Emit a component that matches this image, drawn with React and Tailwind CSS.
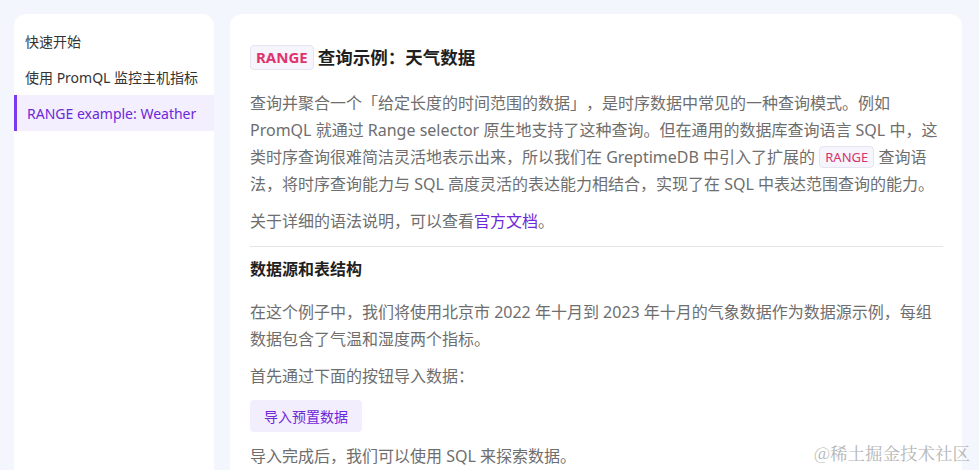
const font = { fontFamily: '"Noto Sans", "Noto Sans CJK SC", sans-serif' }

const navItems = ['快速开始', '使用 PromQL 监控主机指标', 'RANGE example: Weather']

const Code = ({ children }) => (
  <code className="inline-block rounded border border-[#e6e3f2] bg-[#f6f5fb] px-[5px] align-[1px] leading-[20px] text-[13px] text-[#d6336c] [font-family:inherit]">
    {children}
  </code>
)

const App = () => {
  const active = 2

  return (
    <div
      className="relative flex h-[470px] gap-4 overflow-hidden bg-[#f4f6fd] pl-[14px] pt-[14px] [text-spacing-trim:space-all]"
      style={font}
    >
      <aside className="w-[200px] shrink-0 rounded-t-xl bg-white pt-[9px]">
        {navItems.map((item, idx) => (
          <div
            key={item}
            className={
              idx === active
                ? 'flex h-9 items-center border-l-[3px] border-[#7c3aed] bg-[#f3effe] pl-[10px] text-[14px] text-[#6d28d9]'
                : 'flex h-9 items-center pl-[11px] text-[14px] text-[#333]'
            }
          >
            {item}
          </div>
        ))}
      </aside>

      <main className="w-[732px] shrink-0 rounded-t-xl bg-white px-5 pt-[30px]">
        <div className="w-[693px]">
          <h1 className="flex items-center gap-[4px] text-[17.5px] font-bold text-[#1f1f1f]">
            <span className="rounded-[4px] border border-[#e6e3f2] bg-[#f6f5fb] px-[5px] leading-[23px] text-[15px] text-[#e0336e]">
              RANGE
            </span>
            查询示例：天气数据
          </h1>

          <div className="mt-[20px] text-[16px] leading-[27px] text-[#6e6e6e]">
            <p>
              查询并聚合一个「给定长度的时间范围的数据」，是时序数据中常见的一种查询模式。例如 PromQL 就通过 Range selector
              原生地支持了这种查询。但在通用的数据库查询语言 SQL 中，这类时序查询很难简洁灵活地表示出来，所以我们在 GreptimeDB
              中引入了扩展的 <Code>RANGE</Code> 查询语法，将时序查询能力与 SQL 高度灵活的表达能力相结合，实现了在 SQL
              中表达范围查询的能力。
            </p>
            <p className="mt-[10px]">
              关于详细的语法说明，可以查看<span className="text-[#6d28d9]">官方文档</span>。
            </p>
          </div>

          <hr className="mt-[11px] border-[#e5e5e5]" />

          <h2 className="mt-[9px] text-[16px] font-bold leading-[26px] text-[#1f1f1f]">数据源和表结构</h2>

          <div className="mt-[17px] text-[16px] leading-[27px] text-[#6e6e6e]">
            <p>
              在这个例子中，我们将使用北京市 2022 年十月到 2023 年十月的气象数据作为数据源示例，每组数据包含了气温和湿度两个指标。
            </p>
            <p className="mt-[10px]">首先通过下面的按钮导入数据：</p>
            <button className="mt-[10px] h-8 rounded-[4px] bg-[#f3eefe] px-[14px] text-[14px] text-[#6d28d9]">
              导入预置数据
            </button>
            <p className="mt-[11px]">导入完成后，我们可以使用 SQL 来探索数据。</p>
          </div>
        </div>
      </main>

      <div
        className="absolute bottom-[4px] right-[9px] text-[17.5px] text-[#b5b5b5]"
        style={{ fontFamily: '"Noto Serif CJK SC", "Noto Sans CJK SC", serif' }}
      >
        @稀土掘金技术社区
      </div>
    </div>
  )
}

export default App
